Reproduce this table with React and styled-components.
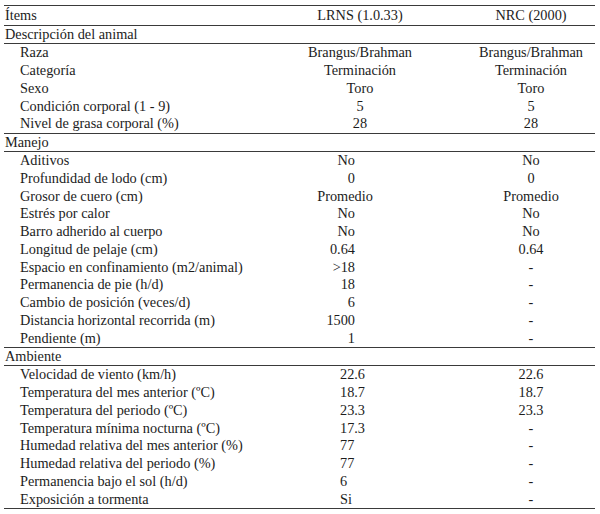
import React from "react";
import styled, { createGlobalStyle, css } from "styled-components";

const Global = createGlobalStyle`
  html, body { margin: 0; padding: 0; background: #ffffff; }
  body { font-family: "Liberation Serif", "Times New Roman", serif; color: #1c1c1c; }
`;

const Page = styled.div`
  padding: 5px 0 0 4px;
  width: 591px;
`;

const Table = styled.div`
  width: 591px;
  border-top: 1.5px solid #3a3a3a;
  border-bottom: 1.5px solid #3a3a3a;
  font-size: 14.3px;
`;

const Grid = styled.div`
  display: grid;
  grid-template-columns: 296px 120px 47px 128px;
  align-items: center;
  box-sizing: border-box;
  height: ${(p) => p.$h}px;
  white-space: nowrap;
  ${(p) =>
    p.$line &&
    css`
      border-bottom: 1.5px solid #3a3a3a;
    `}
`;

const Section = styled.div`
  & + & {
    border-top: 1.5px solid #3a3a3a;
  }
`;

const Label = styled.div`
  padding-left: ${(p) => (p.$indent ? 16 : 1)}px;
`;

const posStyles = {
  c: css`text-align: center;`,
  r: css`text-align: right; padding-right: 65px;`,
  m: css`text-align: center; padding-right: 30px;`,
  l: css`text-align: left; padding-left: 40px;`,
};

const Lrns = styled.div`
  grid-column: 2;
  ${(p) => posStyles[p.$pos || "c"]}
`;

const Nrc = styled.div`
  grid-column: 4;
  text-align: center;
`;

const sections = [
  {
    title: "Descripción del animal",
    rows: [
      ["Raza", "Brangus/Brahman", "Brangus/Brahman", "c"],
      ["Categoría", "Terminación", "Terminación", "c"],
      ["Sexo", "Toro", "Toro", "c"],
      ["Condición corporal (1 - 9)", "5", "5", "c"],
      ["Nivel de grasa corporal (%)", "28", "28", "c"],
    ],
  },
  {
    title: "Manejo",
    rows: [
      ["Aditivos", "No", "No", "r"],
      ["Profundidad de lodo (cm)", "0", "0", "r"],
      ["Grosor de cuero (cm)", "Promedio", "Promedio", "m"],
      ["Estrés por calor", "No", "No", "r"],
      ["Barro adherido al cuerpo", "No", "No", "r"],
      ["Longitud de pelaje (cm)", "0.64", "0.64", "r"],
      ["Espacio en confinamiento (m2/animal)", ">18", "-", "r"],
      ["Permanencia de pie (h/d)", "18", "-", "r"],
      ["Cambio de posición (veces/d)", "6", "-", "r"],
      ["Distancia horizontal recorrida (m)", "1500", "-", "r"],
      ["Pendiente (m)", "1", "-", "r"],
    ],
  },
  {
    title: "Ambiente",
    rows: [
      ["Velocidad de viento (km/h)", "22.6", "22.6", "l"],
      ["Temperatura del mes anterior (ºC)", "18.7", "18.7", "l"],
      ["Temperatura del periodo (ºC)", "23.3", "23.3", "l"],
      ["Temperatura mínima nocturna (ºC)", "17.3", "-", "l"],
      ["Humedad relativa del mes anterior (%)", "77", "-", "l"],
      ["Humedad relativa del periodo (%)", "77", "-", "l"],
      ["Permanencia bajo el sol (h/d)", "6", "-", "l"],
      ["Exposición a tormenta", "Si", "-", "l"],
    ],
  },
];

export default function App() {
  return (
    <>
      <Global />
      <Page>
        <Table>
          <Grid $h={20} $line>
            <Label>Ítems</Label>
            <Lrns $pos="c">LRNS (1.0.33)</Lrns>
            <Nrc>NRC (2000)</Nrc>
          </Grid>
          {sections.map((s) => (
            <Section key={s.title}>
              <Grid $h={18} $line>
                <Label>{s.title}</Label>
              </Grid>
              {s.rows.map(([label, a, b, pos]) => (
                <Grid $h={17.75} key={label}>
                  <Label $indent>{label}</Label>
                  <Lrns $pos={pos}>{a}</Lrns>
                  <Nrc>{b}</Nrc>
                </Grid>
              ))}
            </Section>
          ))}
        </Table>
      </Page>
    </>
  );
}
